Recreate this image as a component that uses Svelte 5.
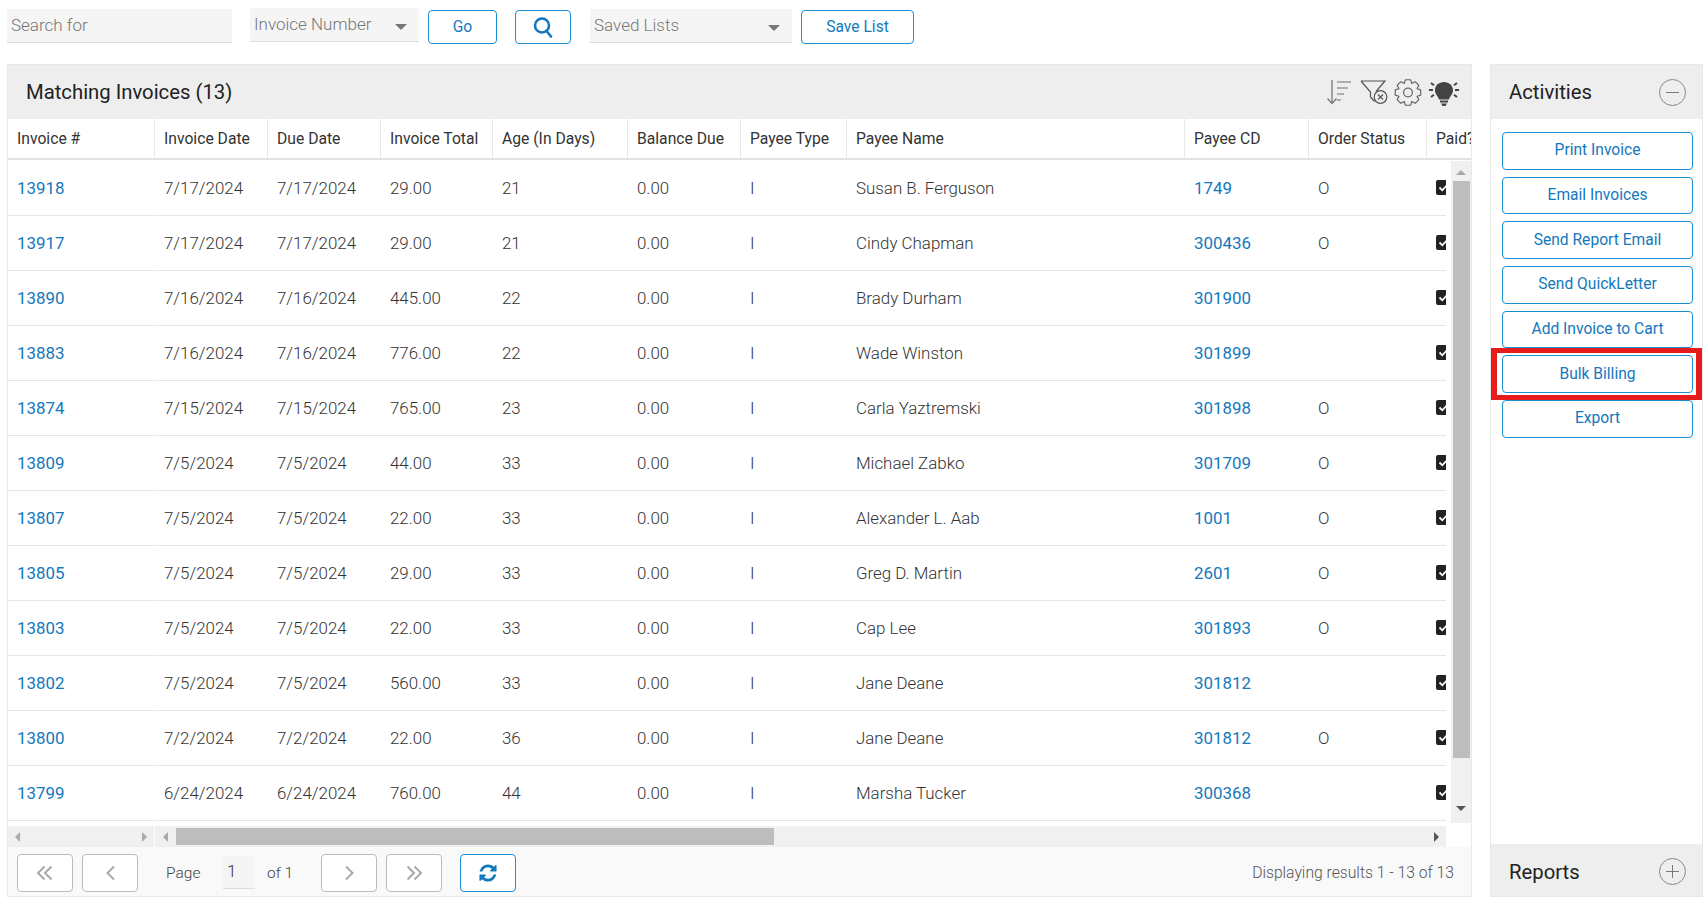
<script lang="ts">
  const columns = [
    "Invoice #", "Invoice Date", "Due Date", "Invoice Total", "Age (In Days)", "Balance Due",
    "Payee Type", "Payee Name", "Payee CD", "Order Status", "Paid?"
  ];

  const invoices = [
    ["13918", "7/17/2024", "29.00", "21", "Susan B. Ferguson", "1749", "O"],
    ["13917", "7/17/2024", "29.00", "21", "Cindy Chapman", "300436", "O"],
    ["13890", "7/16/2024", "445.00", "22", "Brady Durham", "301900", ""],
    ["13883", "7/16/2024", "776.00", "22", "Wade Winston", "301899", ""],
    ["13874", "7/15/2024", "765.00", "23", "Carla Yaztremski", "301898", "O"],
    ["13809", "7/5/2024", "44.00", "33", "Michael Zabko", "301709", "O"],
    ["13807", "7/5/2024", "22.00", "33", "Alexander L. Aab", "1001", "O"],
    ["13805", "7/5/2024", "29.00", "33", "Greg D. Martin", "2601", "O"],
    ["13803", "7/5/2024", "22.00", "33", "Cap Lee", "301893", "O"],
    ["13802", "7/5/2024", "560.00", "33", "Jane Deane", "301812", ""],
    ["13800", "7/2/2024", "22.00", "36", "Jane Deane", "301812", "O"],
    ["13799", "6/24/2024", "760.00", "44", "Marsha Tucker", "300368", ""]
  ];

  const activities = [
    "Print Invoice", "Email Invoices", "Send Report Email", "Send QuickLetter",
    "Add Invoice to Cart", "Bulk Billing", "Export"
  ];

  // 8 tooth outline for the settings icon
  function gearPath(cx: number, cy: number, outer: number, inner: number) {
    const pts: string[] = [];
    for (let i = 0; i < 8; i++) {
      const a = (i * Math.PI) / 4;
      const steps: [number, number][] = [
        [-0.39, inner], [-0.2, outer], [0.2, outer], [0.39, inner]
      ];
      for (const [off, r] of steps) {
        pts.push(`${(cx + r * Math.cos(a + off)).toFixed(2)} ${(cy + r * Math.sin(a + off)).toFixed(2)}`);
      }
    }
    return "M" + pts.join("L") + "Z";
  }
</script>

<div class="page">
  <div class="search-bar">
    <input class="field search-input" placeholder="Search for" />
    <div class="field select invoice-select">
      <span>Invoice Number</span>
      <i class="caret"></i>
    </div>
    <button class="btn go-btn">Go</button>
    <button class="btn icon-btn" aria-label="Search">
      <svg width="22" height="22" viewBox="0 0 22 22" fill="none" stroke="#1478bd" stroke-width="2.6">
        <circle cx="10" cy="9.5" r="7" />
        <path d="M14.5 15l4.5 5.5" stroke-linecap="round" />
      </svg>
    </button>
    <div class="field select saved-select">
      <span>Saved Lists</span>
      <i class="caret"></i>
    </div>
    <button class="btn save-btn">Save List</button>
  </div>

  <div class="content">
    <section class="invoices">
      <header class="panel-head">
        <h2>Matching Invoices (13)</h2>
        <div class="tools">
          <svg class="sort-icon" width="26" height="26" viewBox="0 0 26 26" fill="none" stroke="#777" stroke-width="1.3">
            <path d="M6 1v23M1.5 19.5L6 24.5l4.5-5" />
            <path d="M11 3h14M11 9h11M11 15h7M11 21h4" stroke="#999" stroke-width="1.6" />
          </svg>
          <svg width="28" height="26" viewBox="0 0 28 26" fill="none" stroke="#555" stroke-width="1.2">
            <path d="M1 2h24l-9 10.5M1 2l9.5 11v5l4 4.5" />
            <circle cx="20.5" cy="18" r="6.3" />
            <path d="M18 15.5l5 5M23 15.5l-5 5" />
          </svg>
          <svg width="28" height="27" viewBox="0 0 28 27" fill="none" stroke="#666" stroke-width="1.2">
            <path d={gearPath(14, 13.5, 13, 9.8)} stroke-linejoin="round" />
            <circle cx="14" cy="13.5" r="4.4" />
          </svg>
          <svg class="bulb-icon" width="32" height="26" viewBox="0 0 32 26">
            <path d="M16 1c-5.200 0-9 3.600-9 8.200 0 4.200 3.200 5.800 4 9.300h10c.8-3.500 4-5.100 4-9.300C25 4.600 21.200 1 16 1z" fill="#444" />
            <path d="M12 19.500h8v2h-8zM13 22.500h6l-1.500 2.500h-3z" fill="#444" />
            <path d="M1 9h4M27 9h4M3 2l3 2.200M29 2l-3 2.200M3 16l3-2.200M29 16l-3-2.200" stroke="#444" stroke-width="2" fill="none" />
          </svg>
        </div>
      </header>

      <div class="table-head">
        {#each columns as col}
          <div class="th">{col}</div>
        {/each}
      </div>

      <div class="table-wrap">
        <div class="table-main">
          <div class="rows">
            {#each invoices as inv}
              <div class="row">
                <a class="cell link" href="#top">{inv[0]}</a>
                <div class="cell">{inv[1]}</div>
                <div class="cell">{inv[1]}</div>
                <div class="cell">{inv[2]}</div>
                <div class="cell">{inv[3]}</div>
                <div class="cell">0.00</div>
                <div class="cell">I</div>
                <div class="cell">{inv[4]}</div>
                <a class="cell link" href="#top">{inv[5]}</a>
                <div class="cell">{inv[6]}</div>
                <div class="cell">
                  <span class="check">
                    <svg width="15" height="15" viewBox="0 0 15 15" fill="none" stroke="#fff" stroke-width="1.800">
                      <path d="M3.500 7.500l2.800 2.800 5-5.500" />
                    </svg>
                  </span>
                </div>
              </div>
            {/each}
          </div>
          <div class="hscroll">
            <div class="hscroll-frozen">
              <i class="arrow left"></i>
              <i class="arrow right"></i>
            </div>
            <div class="hscroll-main">
              <i class="arrow left"></i>
              <div class="hthumb"></div>
              <i class="arrow right dark"></i>
            </div>
          </div>
        </div>
        <div class="vscroll">
          <i class="arrow up"></i>
          <div class="vthumb"></div>
          <i class="arrow down"></i>
        </div>
      </div>

      <footer class="pager">
        <button class="btn page-btn" aria-label="First page">
          <svg width="18" height="16" viewBox="0 0 18 16" fill="none" stroke="#aaa" stroke-width="2"><path d="M8.500 1.500L2 8l6.500 6.500M15.500 1.500L9 8l6.500 6.500" /></svg>
        </button>
        <button class="btn page-btn" aria-label="Previous page">
          <svg width="11" height="16" viewBox="0 0 11 16" fill="none" stroke="#aaa" stroke-width="2"><path d="M9 1.500L2.500 8 9 14.500" /></svg>
        </button>
        <span class="page-label">Page</span>
        <input class="page-input" value="1" />
        <span class="page-of">of 1</span>
        <button class="btn page-btn" aria-label="Next page">
          <svg width="11" height="16" viewBox="0 0 11 16" fill="none" stroke="#aaa" stroke-width="2"><path d="M2 1.500L8.500 8 2 14.500" /></svg>
        </button>
        <button class="btn page-btn" aria-label="Last page">
          <svg width="18" height="16" viewBox="0 0 18 16" fill="none" stroke="#aaa" stroke-width="2"><path d="M2.500 1.500L9 8l-6.500 6.500M9.500 1.500L16 8l-6.500 6.500" /></svg>
        </button>
        <button class="btn refresh-btn" aria-label="Refresh">
          <svg width="20" height="20" viewBox="0 0 1792 1792" fill="#1478bd"><path d="M1639 1056q0 5-1 7-64 268-268 434.500t-478 166.500q-146 0-282.500-55t-243.500-157l-129 129q-19 19-45 19t-45-19-19-45v-448q0-26 19-45t45-19h448q26 0 45 19t19 45-19 45l-137 137q71 66 161 102t187 36q134 0 250-65t186-179q11-17 53-117 8-23 30-23h192q13 0 22.500 9.500t9.500 22.500zm25-800v448q0 26-19 45t-45 19h-448q-26 0-45-19t-19-45 19-45l138-138q-148-137-349-137-134 0-250 65t-186 179q-11 17-53 117-8 23-30 23h-199q-13 0-22.500-9.500t-9.500-22.500v-7q65-268 270-434.500t480-166.500q146 0 284 55.500t245 156.500l130-129q19-19 45-19t45 19 19 45z" /></svg>
        </button>
        <span class="results">Displaying results 1 - 13 of 13</span>
      </footer>
    </section>

    <aside class="sidebar">
      <header class="panel-head side-head">
        <h2>Activities</h2>
        <span class="circle-btn"><i class="bar"></i></span>
      </header>
      <div class="activity-list">
        {#each activities as label}
          <div class="activity" class:marked={label === "Bulk Billing"}>
            <button class="btn activity-btn">{label}</button>
          </div>
        {/each}
      </div>
      <footer class="panel-head side-foot">
        <h2>Reports</h2>
        <span class="circle-btn"><i class="bar"></i><i class="bar vert"></i></span>
      </footer>
    </aside>
  </div>
</div>

<style>
  :global(body) {
    overflow: hidden;
    background: #fff;
  }

  .page {
    width: 1708px;
    height: 900px;
    padding: 0 5px 0 7px;
    box-sizing: border-box;
    font-family: Roboto, "Liberation Sans", sans-serif;
    color: #444;
  }

  .search-bar {
    display: flex;
    height: 64px;
    align-items: flex-start;
    padding-top: 9px;
    box-sizing: border-box;
  }

  .field {
    height: 34px;
    box-sizing: border-box;
    background: #f5f5f5;
    border: none;
    border-bottom: 1px solid #ddd;
    font: 300 17px Roboto, sans-serif;
    color: #777;
    outline: none;
  }

  .search-input {
    width: 225px;
    padding: 0 4px 2px;
  }

  .search-input::placeholder {
    color: #777;
  }

  .select {
    display: flex;
    align-items: center;
    justify-content: space-between;
    padding: 0 12px 2px 4px;
  }

  .invoice-select {
    width: 169px;
    margin: -1px 0 0 18px;
  }

  .saved-select {
    width: 202px;
    margin-left: 19px;
  }

  .caret {
    width: 0;
    height: 0;
    margin-top: 6px;
    border-left: 6px solid transparent;
    border-right: 6px solid transparent;
    border-top: 6px solid #777;
  }

  .btn {
    box-sizing: border-box;
    background: #fff;
    border: 1px solid #1a8fd6;
    border-radius: 4px;
    color: #1478bd;
    font: 400 15.6px Roboto, sans-serif;
    padding: 0;
    display: flex;
    align-items: center;
    justify-content: center;
    cursor: pointer;
  }

  .go-btn,
  .save-btn,
  .icon-btn {
    height: 34px;
    margin-top: 1px;
  }

  .go-btn {
    width: 69px;
    margin-left: 9px;
  }

  .icon-btn {
    width: 56px;
    margin-left: 18px;
  }

  .save-btn {
    width: 113px;
    margin-left: 9px;
  }

  .content {
    display: flex;
    gap: 18px;
    height: 833px;
  }

  .invoices {
    width: 1465px;
    box-sizing: border-box;
    border: 1px solid #e8e8e8;
    display: flex;
    flex-direction: column;
    overflow: hidden;
  }

  .panel-head {
    display: flex;
    align-items: center;
    justify-content: space-between;
    height: 54px;
    flex: none;
    background: #eee;
    padding: 0 11px 0 18px;
  }

  .panel-head h2 {
    margin: 0;
    font-size: 20.3px;
    font-weight: 400;
    color: #222;
  }

  .tools {
    display: flex;
    align-items: center;
    gap: 6px;
  }

  .sort-icon {
    margin-right: 2px;
  }

  .bulb-icon {
    margin-top: 4px;
  }

  .table-head,
  .row {
    display: grid;
    grid-template-columns: 146px 113px 113px 112px 135px 113px 106px 338px 124px 118px 60px;
  }

  .table-head {
    height: 41px;
    flex: none;
    overflow: hidden;
    border-bottom: 2px solid #e2e2e2;
    box-sizing: border-box;
  }

  .th {
    display: flex;
    align-items: center;
    padding-left: 9px;
    font-size: 15.7px;
    color: #333;
    white-space: nowrap;
    border-left: 1px solid #e8e8e8;
  }

  .th:first-child {
    border-left: none;
  }

  .table-wrap {
    flex: 1;
    display: flex;
    min-height: 0;
    padding-top: 1px;
  }

  .table-main {
    width: 1438px;
    overflow: hidden;
    flex: none;
  }

  .rows {
    height: 665px;
  }

  .row {
    height: 55px;
    box-sizing: border-box;
  }

  .cell {
    display: flex;
    align-items: center;
    padding-left: 10px;
    font-size: 16.9px;
    font-weight: 300;
    color: #333;
    white-space: nowrap;
    border-bottom: 1px solid #e6e6e6;
    text-decoration: none;
  }

  .cell:first-child {
    padding-left: 9px;
    margin-right: 1px;
  }

  .link {
    color: #1478bd;
    font-weight: 400;
  }

  .check {
    width: 15px;
    height: 15px;
    flex: none;
    margin-top: -1px;
    display: block;
    background: #222;
    border-radius: 2px;
  }

  .check svg {
    display: block;
  }

  .hscroll {
    display: flex;
    height: 21px;
    gap: 1px;
  }

  .hscroll-frozen,
  .hscroll-main {
    display: flex;
    align-items: center;
    justify-content: space-between;
    background: #f0f0f0;
  }

  .hscroll-frozen {
    width: 146px;
    padding: 0 7px;
    box-sizing: border-box;
  }

  .hscroll-main {
    flex: 1;
    padding: 0 7px 0 8px;
  }

  .hthumb {
    width: 598px;
    height: 17px;
    margin-left: 8px;
    margin-right: auto;
    background: #bdbdbd;
  }

  .arrow {
    display: block;
    width: 0;
    height: 0;
    flex: none;
    border: 5px solid transparent;
  }

  .arrow.left {
    border-left: none;
    border-right-color: #aaa;
  }

  .arrow.right {
    border-right: none;
    border-left-color: #aaa;
  }

  .arrow.dark {
    border-left-color: #555;
  }

  .arrow.up {
    border-top: none;
    border-bottom-color: #aaa;
  }

  .arrow.down {
    border-bottom: none;
    border-top-color: #555;
    margin-top: 48px;
  }

  .vscroll {
    width: 20px;
    height: 662px;
    margin-left: 5px;
    flex: none;
    display: flex;
    flex-direction: column;
    align-items: center;
    padding-top: 9px;
    box-sizing: border-box;
    background: #f0f0f0;
  }

  .vthumb {
    width: 17px;
    height: 577px;
    margin-top: 6px;
    background: #bdbdbd;
  }

  .pager {
    height: 49px;
    flex: none;
    display: flex;
    align-items: center;
    padding: 2px 0 0 9px;
    box-sizing: border-box;
    background: #f9f9f9;
    font-size: 15.5px;
    font-weight: 300;
  }

  .page-btn,
  .refresh-btn {
    width: 56px;
    height: 38px;
    margin-right: 9px;
    background: #fff;
    border-color: #bbb;
  }

  .refresh-btn {
    margin-left: 9px;
    border-color: #1a8fd6;
  }

  .page-label {
    margin-left: 19px;
    width: 57px;
  }

  .page-input {
    width: 32px;
    height: 33px;
    box-sizing: border-box;
    padding: 0 0 2px 4px;
    background: #f5f5f5;
    border: none;
    border-bottom: 1px solid #ddd;
    font: 300 17px Roboto, sans-serif;
    color: #333;
    outline: none;
  }

  .page-of {
    margin-left: 12px;
    width: 54px;
  }

  .results {
    margin-left: auto;
    margin-right: 17px;
    font-size: 15.7px;
    color: #555;
  }

  .sidebar {
    width: 213px;
    box-sizing: border-box;
    border: 1px solid #e8e8e8;
    display: flex;
    flex-direction: column;
  }

  .side-head,
  .side-foot {
    padding: 0 16px 0 18px;
  }

  .side-foot {
    height: 52px;
    padding-top: 3px;
    box-sizing: border-box;
    margin-top: auto;
  }

  .circle-btn {
    position: relative;
    width: 27px;
    height: 27px;
    box-sizing: border-box;
    border: 1px solid #888;
    border-radius: 50%;
  }

  .bar {
    position: absolute;
    left: 6px;
    right: 6px;
    top: 12px;
    height: 1px;
    background: #777;
  }

  .bar.vert {
    left: 12px;
    right: auto;
    top: 6px;
    width: 1px;
    height: 13px;
  }

  .activity-list {
    display: flex;
    flex-direction: column;
    gap: 7px;
    padding: 13px 9px 0 11px;
  }

  .activity {
    position: relative;
  }

  .activity-btn {
    width: 100%;
    height: 37.7px;
    padding-bottom: 1px;
    background: #fff;
  }

  /* red annotation around the highlighted action */
  .activity.marked::after {
    content: "";
    position: absolute;
    inset: -7px -9px -7px -11px;
    border: solid #e61c1c;
    border-width: 5px 6px;
    pointer-events: none;
  }
</style>
